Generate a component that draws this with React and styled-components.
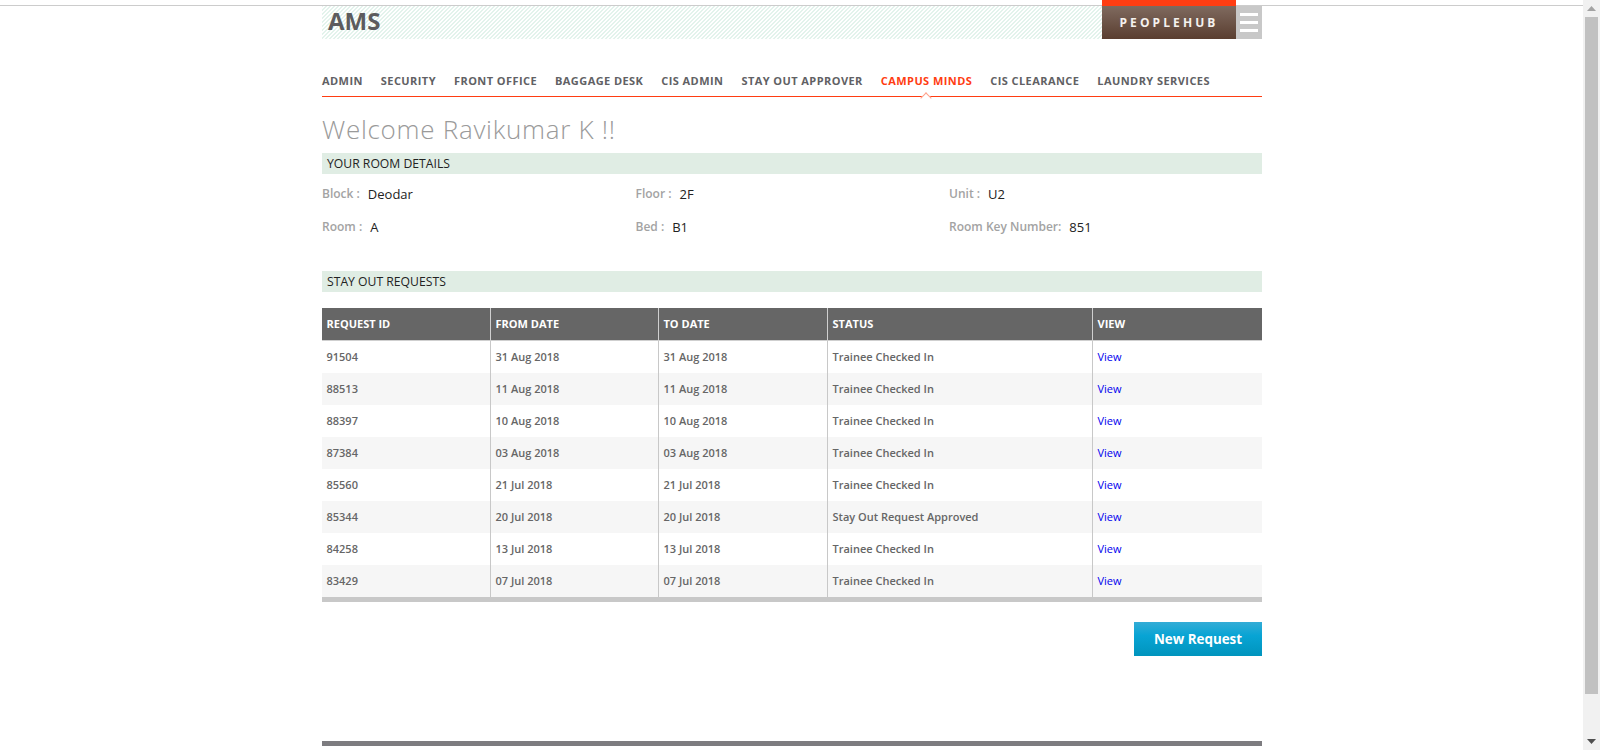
import React from 'react';
import styled, { createGlobalStyle } from 'styled-components';

const GlobalStyle = createGlobalStyle`
  html, body { margin: 0; padding: 0; height: 100%; overflow: hidden; background: #fff; }
  body { font-family: "Open Sans", "Liberation Sans", sans-serif; }
`;

const Shell = styled.div`
  display: flex;
  width: 1600px;
  height: 750px;
  overflow: hidden;
`;

const Page = styled.div`
  flex: 1;
  background: linear-gradient(#cccccc, #cccccc) no-repeat 0 5px / 100% 1px;
`;

const Container = styled.div`
  width: 940px;
  margin-left: 322px;
  display: flex;
  flex-direction: column;
`;

const Header = styled.header`
  display: flex;
  height: 39px;
`;

const Brand = styled.div`
  flex: 1;
  margin-top: 6px;
  padding-left: 6px;
  font-size: 24px;
  font-weight: 700;
  line-height: 30px;
  color: #5c5c5e;
  background: repeating-linear-gradient(135deg, #e3f3ec 0, #e3f3ec 1px, #ffffff 1px, #ffffff 2.828px);
`;

const HubLink = styled.div`
  width: 134px;
  box-sizing: border-box;
  border-top: 6px solid #ff3d12;
  display: flex;
  align-items: center;
  justify-content: center;
  font-size: 12px;
  font-weight: 700;
  letter-spacing: 3.1px;
  color: #f4f1ee;
  background: linear-gradient(#7f6a5f, #5a3e30);
`;

const MenuButton = styled.div`
  width: 26px;
  margin-top: 6px;
  padding: 7px 4px 0;
  box-sizing: border-box;
  display: flex;
  flex-direction: column;
  gap: 5px;
  background: #c8c8c8;
`;

const MenuBar = styled.span`
  display: block;
  height: 3px;
  background: #fff;
`;

const Nav = styled.nav`
  display: flex;
  gap: 18px;
  margin-top: 33px;
  height: 24px;
  border-bottom: 1px solid #ff3d12;
`;

const NavItem = styled.a`
  position: relative;
  font-size: 11px;
  font-weight: 700;
  line-height: 18px;
  letter-spacing: 0.43px;
  color: ${(p) => (p.$active ? '#ff3d12' : '#616164')};

  ${(p) => p.$active && `
    &::after {
      content: '';
      position: absolute;
      left: 41px;
      bottom: -6px;
      width: 7px;
      height: 7px;
      background: #fff;
      border-left: 1px solid #ffa089;
      border-top: 1px solid #ffa089;
      transform: rotate(45deg);
    }
  `}
`;

const Title = styled.h1`
  margin: 14px 0 0;
  font-size: 26px;
  font-weight: 300;
  letter-spacing: 0.72px;
  line-height: 36px;
  color: #9a9a9a;
`;

const SectionBar = styled.div`
  margin-top: ${(p) => p.$top}px;
  height: 21px;
  padding-left: 5px;
  font-size: 12.2px;
  line-height: 21px;
  color: #222;
  background: #e0ede4;
`;

const InfoGrid = styled.div`
  display: grid;
  grid-template-columns: repeat(3, 313.5px);
  grid-auto-rows: 33px;
  margin-top: 3px;
`;

const InfoCell = styled.div`
  display: flex;
  align-items: center;
  gap: 8px;
`;

const InfoLabel = styled.span`
  font-size: 12px;
  font-weight: 600;
  color: #a3a3a3;
`;

const InfoValue = styled.span`
  font-size: 13px;
  line-height: 17px;
  padding-top: 1px;
  color: #222;
`;

const Table = styled.table`
  margin-top: 16px;
  width: 940px;
  table-layout: fixed;
  border-collapse: separate;
  border-spacing: 0;
  border-bottom: 5px solid #c8c8c8;
`;

const HeadCell = styled.th`
  width: ${(p) => p.$width}px;
  height: 33px;
  padding: 0 0 2px 4.5px;
  box-sizing: border-box;
  border-right: 1px solid #cfcfcf;
  border-bottom: 1px solid #cfcfcf;
  text-align: left;
  font-size: 11px;
  font-weight: 700;
  color: #fff;
  background: #666;

  &:last-child { border-right: 0; }
`;

const Row = styled.tr`
  background: ${(p) => (p.$striped ? '#f6f6f6' : '#fff')};
`;

const Cell = styled.td`
  height: 32px;
  padding: 0 0 2px 4.5px;
  box-sizing: border-box;
  border-right: 1px solid #c8c8c8;
  font-size: 11px;
  font-weight: 600;
  color: #666;

  &:last-child { border-right: 0; }
`;

const ViewLink = styled.a`
  color: #0000ee;
  font-weight: 400;
`;

const Actions = styled.div`
  display: flex;
  justify-content: flex-end;
  margin-top: 20px;
`;

const NewRequest = styled.button`
  width: 128px;
  height: 34px;
  padding: 0;
  border: 0;
  font-family: inherit;
  font-size: 13.4px;
  font-weight: 700;
  color: #fff;
  background: linear-gradient(#33acd6 0, #08a4d4 40%, #0094bd 100%);
`;

const FooterRule = styled.div`
  margin-top: 85px;
  height: 5px;
  background: #7d7c80;
`;

const Scrollbar = styled.div`
  width: 17px;
  display: flex;
  flex-direction: column;
  background: #f1f1f1;
`;

const ScrollArrow = styled.div`
  height: 17px;
  display: flex;
  align-items: center;
  justify-content: center;
`;

const ScrollThumb = styled.div`
  height: 677px;
  margin: 0 2px;
  background: #c1c1c1;
`;

const ScrollSpace = styled.div`
  flex: 1;
`;

const navItems = ['ADMIN', 'SECURITY', 'FRONT OFFICE', 'BAGGAGE DESK', 'CIS ADMIN', 'STAY OUT APPROVER', 'CAMPUS MINDS', 'CIS CLEARANCE', 'LAUNDRY SERVICES'];

const columns = [
  { label: 'REQUEST ID', width: 169 },
  { label: 'FROM DATE', width: 168 },
  { label: 'TO DATE', width: 169 },
  { label: 'STATUS', width: 265 },
  { label: 'VIEW', width: 169 },
];

const requests = [
  ['91504', '31 Aug 2018', 'Trainee Checked In'],
  ['88513', '11 Aug 2018', 'Trainee Checked In'],
  ['88397', '10 Aug 2018', 'Trainee Checked In'],
  ['87384', '03 Aug 2018', 'Trainee Checked In'],
  ['85560', '21 Jul 2018', 'Trainee Checked In'],
  ['85344', '20 Jul 2018', 'Stay Out Request Approved'],
  ['84258', '13 Jul 2018', 'Trainee Checked In'],
  ['83429', '07 Jul 2018', 'Trainee Checked In'],
];

const roomInfo = [
  ['Block :', 'Deodar'],
  ['Floor :', '2F'],
  ['Unit :', 'U2'],
  ['Room :', 'A'],
  ['Bed :', 'B1'],
  ['Room Key Number:', '851'],
];

const Arrow = ({ down, color }) => (
  <svg width="9" height="5" viewBox="0 0 9 5">
    <path d={down ? 'M0 0H9L4.5 5Z' : 'M0 5H9L4.5 0Z'} fill={color} />
  </svg>
);

export default function App() {
  return (
    <Shell>
      <GlobalStyle />
      <Page>
        <Container>
          <Header>
            <Brand>AMS</Brand>
            <HubLink>PEOPLEHUB</HubLink>
            <MenuButton>
              <MenuBar />
              <MenuBar />
              <MenuBar />
            </MenuButton>
          </Header>

          <Nav>
            {navItems.map((item) => (
              <NavItem key={item} $active={item === 'CAMPUS MINDS'}>{item}</NavItem>
            ))}
          </Nav>

          <Title>Welcome Ravikumar K !!</Title>

          <SectionBar $top={6}>YOUR ROOM DETAILS</SectionBar>
          <InfoGrid>
            {roomInfo.map(([label, value]) => (
              <InfoCell key={label}>
                <InfoLabel>{label}</InfoLabel>
                <InfoValue>{value}</InfoValue>
              </InfoCell>
            ))}
          </InfoGrid>

          <SectionBar $top={28}>STAY OUT REQUESTS</SectionBar>
          <Table>
            <thead>
              <tr>
                {columns.map((col) => (
                  <HeadCell key={col.label} $width={col.width}>{col.label}</HeadCell>
                ))}
              </tr>
            </thead>
            <tbody>
              {requests.map(([id, date, status], i) => (
                <Row key={id} $striped={i % 2 === 1}>
                  <Cell>{id}</Cell>
                  <Cell>{date}</Cell>
                  <Cell>{date}</Cell>
                  <Cell>{status}</Cell>
                  <Cell><ViewLink>View</ViewLink></Cell>
                </Row>
              ))}
            </tbody>
          </Table>

          <Actions>
            <NewRequest>New Request</NewRequest>
          </Actions>
          <FooterRule />
        </Container>
      </Page>
      <Scrollbar>
        <ScrollArrow><Arrow color="#a3a3a3" /></ScrollArrow>
        <ScrollThumb />
        <ScrollSpace />
        <ScrollArrow><Arrow down color="#505050" /></ScrollArrow>
      </Scrollbar>
    </Shell>
  );
}
